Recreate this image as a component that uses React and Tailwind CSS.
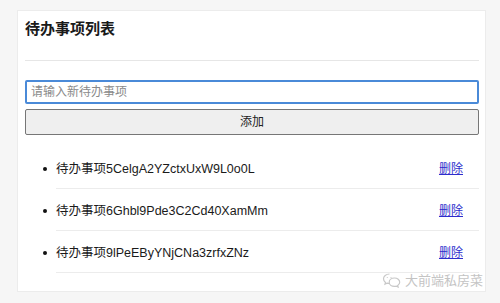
import { useState } from "react"

const font = { fontFamily: '"Liberation Sans", "Noto Sans CJK SC", sans-serif' }

function WeChatMark() {
  return (
    <svg width="20" height="16" viewBox="0 0 20 16" fill="none" stroke="#c8c8c8" strokeWidth="1.2">
      <path d="M7.5 2C4 2 1.5 4.2 1.5 6.8c0 1.5.8 2.8 2 3.7l-.5 1.7 2-1c.8.2 1.6.4 2.5.4" />
      <path d="M12.5 6c-3 0-5.3 1.9-5.3 4.2s2.3 4.2 5.3 4.2c.7 0 1.3-.1 1.900-.3l1.7.9-.4-1.5c1.2-.8 2-2 2-3.3C17.7 7.9 15.5 6 12.5 6z" />
      <circle cx="5.3" cy="5.5" r=".6" fill="#c8c8c8" stroke="none" />
      <circle cx="9" cy="5.5" r=".6" fill="#c8c8c8" stroke="none" />
    </svg>
  )
}

function App() {
  const [todos] = useState([
    "待办事项5CelgA2YZctxUxW9L0o0L",
    "待办事项6Ghbl9Pde3C2Cd40XamMm",
    "待办事项9lPeEByYNjCNa3zrfxZNz",
  ])

  return (
    <div className="w-[500px] h-[303px] bg-[#f6f6f6] pt-[10px] pl-[17px] overflow-hidden" style={font}>
      <div className="relative w-[469px] h-[282px] bg-white border border-[#ececec] pl-[7px] pr-[6px]">
        {/* Header */}
        <div className="pt-[7px] pb-[20px] text-[15px] leading-[22px] font-bold text-[#1a1a1a]">
          待办事项列表
        </div>
        <div className="h-px bg-[#e6e6e6]"></div>

        {/* Input + button */}
        <input
          className="mt-[19px] block w-[454px] h-[24px] border-2 border-[#4a8ad8] rounded-[2px] px-[4px] text-[12px] outline-none placeholder:text-[#8a8a8a]"
          placeholder="请输入新待办事项"
          style={font}
        />
        <button
          className="mt-[5px] block w-[454px] h-[26px] bg-[#efefef] border border-[#767676] rounded-[2px] text-[12px] text-[#222]"
          style={font}
        >
          添加
        </button>

        {/* List */}
        <ul className="mt-[12px] pl-[31px]">
          {todos.map((todo) => (
            <li key={todo} className="relative flex items-center justify-between h-[42px] pt-[3px] border-b border-[#ececec] pr-[16px]">
              <span className="absolute -left-[13px] top-[20px] w-[4px] h-[4px] rounded-full bg-[#111]"></span>
              <span className="text-[12.5px] text-[#1a1a1a]">{todo}</span>
              <a href="#" className="text-[12px] text-[#2d2dcc] underline">删除</a>
            </li>
          ))}
        </ul>

        {/* Watermark */}
        <div className="absolute right-[2px] bottom-[1px] flex items-center gap-[3px] text-[13px] text-[#c4c4c4]">
          <WeChatMark />
          <span>大前端私房菜</span>
        </div>
      </div>
    </div>
  )
}

export default App
